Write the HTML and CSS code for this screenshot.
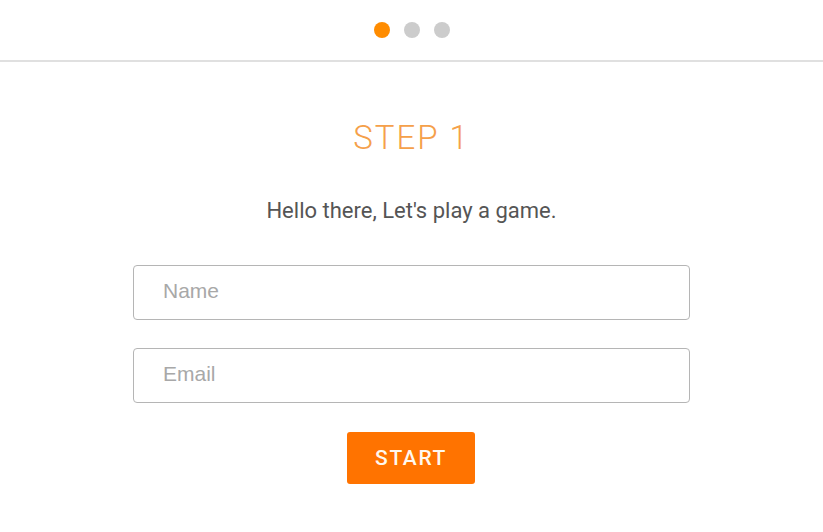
FILE: index.html
```html
<!DOCTYPE html>
<html>
<head>
<meta charset="utf-8">
<link rel="stylesheet" href="styles.css">
</head>
<body>
<header class="steps">
  <span class="dot active"></span>
  <span class="dot"></span>
  <span class="dot"></span>
</header>
<main class="panel">
  <h1 class="title">STEP 1</h1>
  <p class="intro">Hello there, Let's play a game.</p>
  <form class="form">
    <input class="field" type="text" placeholder="Name">
    <input class="field" type="email" placeholder="Email">
    <button class="start" type="button">START</button>
  </form>
</main>
</body>
</html>
```
FILE: styles.css
```css
html, body {
  margin: 0;
  padding: 0;
  background: #fff;
  font-family: Roboto, "Liberation Sans", sans-serif;
}
.steps {
  height: 62px;
  display: flex;
  justify-content: center;
  align-items: center;
  gap: 14px;
  border-bottom: 2px solid #e0e0e0;
  box-sizing: border-box;
  padding-left: 1px;
}
.dot {
  width: 16px;
  height: 16px;
  border-radius: 50%;
  background: #cccccc;
}
.dot.active {
  background: #ff8c00;
}
.panel {
  display: flex;
  flex-direction: column;
  align-items: center;
}
.title {
  margin: 56px 0 0;
  font-weight: 300;
  font-size: 33px;
  line-height: 40px;
  letter-spacing: 2px;
  color: #f5a04a;
}
.intro {
  margin: 40px 0 0;
  font-size: 22px;
  line-height: 26px;
  color: #555;
}
.form {
  margin-top: 41px;
  display: flex;
  flex-direction: column;
  align-items: center;
  gap: 28px;
}
.field {
  box-sizing: border-box;
  width: 557px;
  height: 55px;
  border: 1px solid #b5b5b5;
  border-radius: 4px;
  padding: 0 29px 3px;
  font-family: "Liberation Sans", Arial, sans-serif;
  font-size: 21px;
  color: #333;
  outline: none;
}
.field::placeholder {
  color: #a8a8a8;
}
.start {
  margin: 1px 1px 0 0;
  width: 128px;
  height: 52px;
  border: none;
  border-radius: 3px;
  background: #ff7300;
  color: #fff8ef;
  font-family: Roboto, sans-serif;
  font-weight: 500;
  font-size: 21px;
  letter-spacing: 1.6px;
  cursor: pointer;
}
```
